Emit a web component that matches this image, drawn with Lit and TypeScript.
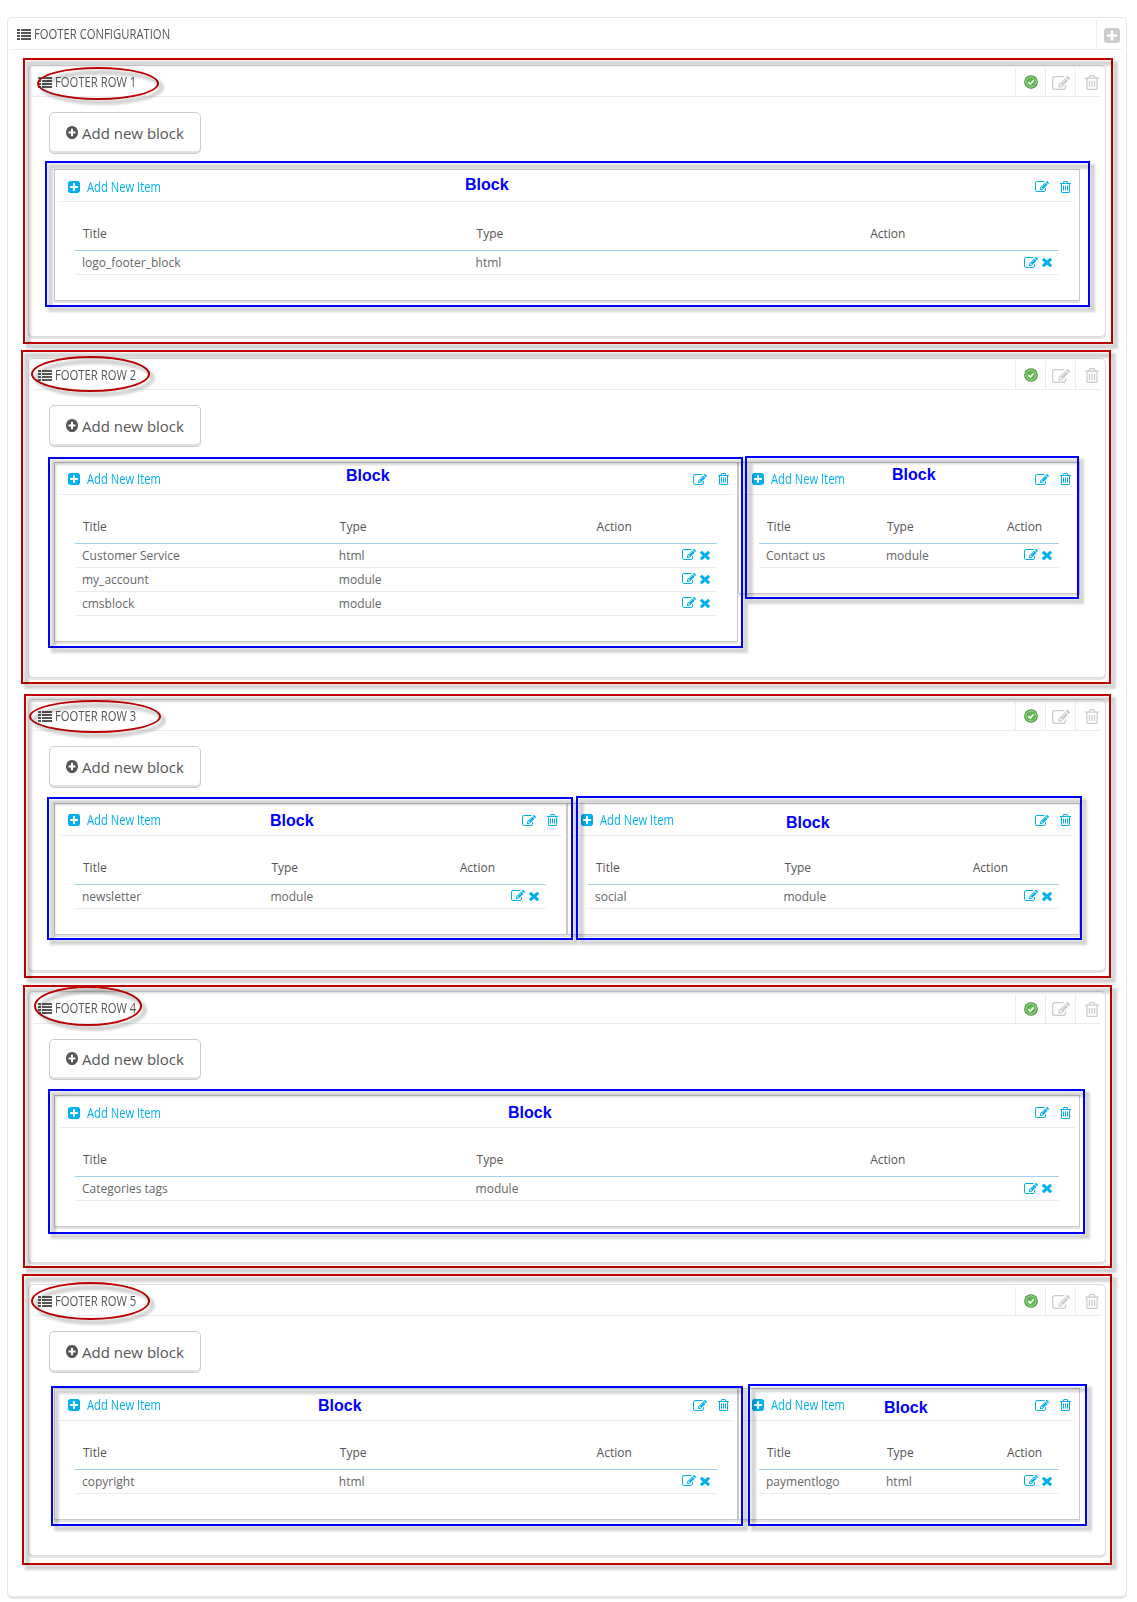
import { LitElement, html, css, svg } from "lit";
import { customElement, property } from "lit/decorators.js";
import { styleMap } from "lit/directives/style-map.js";

interface Item { title: string; type: string }
interface Block { cols: number; items: Item[] }
interface Row { title: string; gap: number; blocks: Block[] }

const ROWS: Row[] = [
  { title: "Footer Row 1", gap: 20.75, blocks: [{ cols: 12, items: [{ title: "logo_footer_block", type: "html" }] }] },
  { title: "Footer Row 2", gap: 21, blocks: [
    { cols: 8, items: [{ title: "Customer Service", type: "html" }, { title: "my_account", type: "module" }, { title: "cmsblock", type: "module" }] },
    { cols: 4, items: [{ title: "Contact us", type: "module" }] } ] },
  { title: "Footer Row 3", gap: 20.4, blocks: [
    { cols: 6, items: [{ title: "newsletter", type: "module" }] },
    { cols: 6, items: [{ title: "social", type: "module" }] } ] },
  { title: "Footer Row 4", gap: 20.6, blocks: [{ cols: 12, items: [{ title: "Categories tags", type: "module" }] }] },
  { title: "Footer Row 5", gap: 0, blocks: [
    { cols: 8, items: [{ title: "copyright", type: "html" }] },
    { cols: 4, items: [{ title: "paymentlogo", type: "html" }] } ] },
];

// Annotation marks: [left, top, right, bottom]
const RED = [[23, 58, 1113, 344], [21, 350, 1111, 684], [24, 694, 1111, 978], [23, 985, 1112, 1268], [22, 1274, 1112, 1565]];
const BLUE = [[45, 161, 1090, 307], [48, 457, 743, 648], [745, 456, 1079, 599], [47, 797, 573, 940], [576, 796, 1082, 940], [48, 1089, 1085, 1234], [51, 1386, 743, 1526], [748, 1384, 1087, 1526]];
const OVAL = [[37, 67, 159, 100], [31, 356, 150, 392], [29, 700, 161, 733], [34, 986, 142, 1026], [31, 1282, 150, 1320]];
// Label positions: [left, baseline]
const LABELS = [[465, 190], [346, 481], [892, 480], [270, 826], [786, 828], [508, 1118], [318, 1411], [884, 1413]];

const ICONS: Record<string, { box: string; body: unknown }> = {
  list: { box: "0 0 14 11", body: svg`<path d="M0 0h3v2H0zM0 3h3v2H0zM0 6h3v2H0zM0 9h3v2H0zM4 0h10v2H4zM4 3h10v2H4zM4 6h10v2H4zM4 9h10v2H4z"/>` },
  plusSquare: { box: "0 0 1536 1536", body: svg`<path fill-rule="evenodd" d="M1280 832V704q0-26-19-45t-45-19H896V320q0-26-19-45t-45-19H704q-26 0-45 19t-19 45v320H320q-26 0-45 19t-19 45v128q0 26 19 45t45 19h320v320q0 26 19 45t45 19h128q26 0 45-19t19-45V896h320q26 0 45-19t19-45zm256-544v960q0 119-84.500 203.500T1248 1536H288q-119 0-203.500-84.500T0 1248V288Q0 169 84.500 84.500T288 0h960q119 0 203.500 84.500T1536 288z"/>` },
  plusCircle: { box: "0 0 1536 1536", body: svg`<path fill-rule="evenodd" d="M1216 832V704q0-26-19-45t-45-19H896V384q0-26-19-45t-45-19H704q-26 0-45 19t-19 45v256H384q-26 0-45 19t-19 45v128q0 26 19 45t45 19h256v256q0 26 19 45t45 19h128q26 0 45-19t19-45V896h256q26 0 45-19t19-45zm320-64q0 209-103 385.500T1153.500 1433 768 1536t-385.500-103T103 1153.500 0 768t103-385.500T382.500 103 768 0t385.500 103T1433 382.500 1536 768z"/>` },
  edit: { box: "0 0 1792 1408", body: svg`<path fill-rule="evenodd" d="M888 1056l116-116-152-152-116 116v56h96v96h56zm440-720q-16-16-33 1L945 687q-17 17-1 33t33-1l350-350q17-17 1-33zm80 594v190q0 119-84.500 203.500T1120 1408H288q-119 0-203.500-84.500T0 1120V288Q0 169 84.500 84.500T288 0h832q63 0 117 25 15 7 18 23 3 17-9 29l-49 49q-14 14-32 8-23-6-45-6H288q-66 0-113 47t-47 113v832q0 66 47 113t113 47h832q66 0 113-47t47-113V994q0-13 9-22l64-64q15-15 35-7t20 29zM1312 192l288 288-672 672H640V864zm444 132l-92 92-288-288 92-92q28-28 68-28t68 28l152 152q28 28 28 68t-28 68z"/>` },
  trash: { box: "0 0 1408 1536", body: svg`<path fill-rule="evenodd" d="M512 608v576q0 14-9 23t-23 9h-64q-14 0-23-9t-9-23V608q0-14 9-23t23-9h64q14 0 23 9t9 23zm256 0v576q0 14-9 23t-23 9h-64q-14 0-23-9t-9-23V608q0-14 9-23t23-9h64q14 0 23 9t9 23zm256 0v576q0 14-9 23t-23 9h-64q-14 0-23-9t-9-23V608q0-14 9-23t23-9h64q14 0 23 9t9 23zm128 724V384H256v948q0 22 7 40.500t14.500 27 10.500 8.500h832q3 0 10.500-8.500t14.500-27 7-40.500zM480 256h448l-48-117q-7-9-17-11H546q-10 2-17 11zm928 32v64q0 14-9 23t-23 9h-96v948q0 83-47 143.500t-113 60.500H288q-66 0-113-58.500T128 1336V384H32q-14 0-23-9t-9-23v-64q0-14 9-23t23-9h309l70-167q15-37 54-63t79-26h320q40 0 79 26t54 63l70 167h309q14 0 23 9t9 23z"/>` },
  remove: { box: "0 0 1188 1188", body: svg`<path d="M1188 956q0 40-28 68l-136 136q-28 28-68 28t-68-28L594 866l-294 294q-28 28-68 28t-68-28L28 1024Q0 996 0 956t28-68l294-294L28 300Q0 272 0 232t28-68L164 28q28-28 68-28t68 28l294 294L888 28q28-28 68-28t68 28l136 136q28 28 28 68t-28 68L866 594l294 294q28 28 28 68z"/>` },
  enabled: { box: "0 0 16 16", body: svg`<circle cx="8" cy="8" r="7.800" fill="#3c8a33"/><circle cx="8" cy="8" r="6.500" fill="#b4e2a6"/><circle cx="8" cy="8" r="5.500" fill="#5cb84c"/><path d="M5 8.200l2.200 2.200 3.800-4.200" fill="none" stroke="#fff" stroke-width="1.900"/>` },
};

@customElement("fa-icon")
class FaIcon extends LitElement {
  @property() name = "list";
  static styles = css`
    :host { display: block; flex: none; }
    svg { display: block; width: 100%; height: 100%; fill: currentColor; }
  `;
  render() {
    const i = ICONS[this.name];
    return html`<svg viewBox=${i.box} preserveAspectRatio="none">${i.body}</svg>`;
  }
}

@customElement("footer-block")
class FooterBlock extends LitElement {
  @property({ attribute: false }) items: Item[] = [];
  static styles = css`
    :host { display: block; box-sizing: border-box; border: 1px solid #c8c8c8; box-shadow: 0 2px 0 #e4e4e4; background: #fff; padding: 0 4px 25px; }
    .head { display: flex; align-items: center; height: 32px; padding: 1.6px 4px 0 9px; box-sizing: border-box; border-bottom: 1px solid #eaedef; color: #00aff0; }
    .plus { width: 12px; height: 12px; margin-right: 7px; }
    .link { flex: 1; font: 14px/16px "Open Sans", sans-serif; white-space: nowrap; }
    .link span { display: inline-block; transform: scaleX(.8); transform-origin: 0 50%; }
    .edit { width: 14px; height: 11px; margin-right: 11px; }
    .trash { width: 11px; height: 12px; }
    .table { margin: 24px 16px 0; color: #666; font: 12px/23px "Open Sans", sans-serif; }
    .tr { display: grid; grid-template-columns: 40% 40% 20%; height: 23px; border-bottom: 1px solid #eaedef; }
    .tr > * { padding-left: 7px; }
    .th { height: 24px; border-bottom: 1px solid #a0d0eb; color: #555; line-height: 16px; }
    .th > * { padding-left: 8px; }
    .act { display: flex; justify-content: flex-end; align-items: center; gap: 4px; padding-right: 7px; color: #00aff0; }
    .act .edit { margin: 0 0 1px; }
    .x { width: 10px; height: 9px; }
  `;
  render() {
    return html`
      <div class="head"><fa-icon class="plus" name="plusSquare"></fa-icon><div class="link"><span>Add New Item</span></div>
        <fa-icon class="edit" name="edit"></fa-icon><fa-icon class="trash" name="trash"></fa-icon></div>
      <div class="table">
        <div class="tr th"><div>Title</div><div>Type</div><div>Action</div></div>
        ${this.items.map((i) => html`<div class="tr"><div>${i.title}</div><div>${i.type}</div>
          <div class="act"><fa-icon class="edit" name="edit"></fa-icon><fa-icon class="x" name="remove"></fa-icon></div></div>`)}
      </div>`;
  }
}

@customElement("footer-row")
class FooterRow extends LitElement {
  @property({ attribute: false }) row!: Row;
  static styles = css`
    :host { display: block; box-sizing: border-box; border: 1px solid #dcdcdc; border-radius: 5px; box-shadow: 0 2px 0 #e4e4e4; background: #fff; padding: 0 4px 35px; }
    .head { display: flex; align-items: center; height: 31.2px; box-sizing: border-box; border-bottom: 1px solid #eaedef; padding-left: 5px; color: #555; }
    .list { width: 14px; height: 11px; margin: 2px 3px 0 0; }
    .name { flex: 1; font: 14px/16px "Open Sans", sans-serif; padding-top: 2px; text-transform: uppercase; white-space: nowrap; }
    .name span { display: inline-block; transform: scaleX(.805); transform-origin: 0 50%; }
    .cell { display: flex; align-items: center; justify-content: center; align-self: flex-end; box-sizing: border-box; width: 30px; height: 29px; margin-bottom: -1px; border-left: 1px solid #eaedef; color: #ccc; }
    .cell:last-child { width: 26px; padding-left: 6px; }
    .ok { width: 14px; height: 14px; margin: 0 0 1px 1px; }
    .edit { width: 18px; height: 14px; margin-left: 1px; }
    .trash { width: 14px; height: 15px; }
    .btn { display: flex; align-items: center; box-sizing: border-box; width: 152px; height: 41.800px; margin: 15px 0 15px 16px; padding: 0 0 1px 16px; border: 1px solid #ccc; border-radius: 5px; box-shadow: inset 0 -2px 0 #e2e2e2; color: #555; font: 15px/20px "Open Sans", sans-serif; white-space: nowrap; }
    .circle { width: 12px; height: 13px; margin-right: 4px; }
    .blocks { display: flex; align-items: flex-start; margin: 0 21px; }
  `;
  render() {
    return html`
      <div class="head"><fa-icon class="list" name="list"></fa-icon><div class="name"><span>${this.row.title}</span></div>
        <div class="cell"><fa-icon class="ok" name="enabled"></fa-icon></div>
        <div class="cell"><fa-icon class="edit" name="edit"></fa-icon></div>
        <div class="cell"><fa-icon class="trash" name="trash"></fa-icon></div></div>
      <div class="btn"><fa-icon class="circle" name="plusCircle"></fa-icon>Add new block</div>
      <div class="blocks">${this.row.blocks.map((b) => html`<footer-block .items=${b.items} style=${styleMap({ width: `${(b.cols / 12) * 100}%` })}></footer-block>`)}</div>`;
  }
}

@customElement("app-root")
class AppRoot extends LitElement {
  static styles = css`
    :host { display: block; position: relative; box-sizing: border-box; width: 1137px; height: 1602px; padding: 17px 10px 0 7px; background: #fff; overflow: hidden; }
    .panel { box-sizing: border-box; height: 1580px; border: 1px solid #e6e6e6; border-radius: 5px; box-shadow: 0 2px 0 #e6e6e6; padding: 0 4px; }
    .head { display: flex; align-items: center; box-sizing: border-box; height: 32px; border-bottom: 1px solid #eaedef; padding-left: 5px; color: #555; }
    .list { width: 14px; height: 11px; margin: 2px 3px 0 0; }
    .name { flex: 1; font: 14px/16px "Open Sans", sans-serif; text-transform: uppercase; white-space: nowrap; }
    .name span { display: inline-block; transform: scaleX(.805); transform-origin: 0 50%; }
    .cell { display: flex; align-items: center; align-self: flex-end; box-sizing: border-box; width: 26px; height: 29px; padding: 2px 0 0 7px; border-left: 1px solid #eaedef; color: #ccc; }
    .add { width: 16px; height: 15px; }
    .rows { padding: 15.25px 16px 0; }
    .mark { position: absolute; box-sizing: border-box; border: 2px solid #c00000; }
    .mark::before { content: ""; position: absolute; inset: 1px -7px -7px 1px; border: 5px solid rgba(0, 0, 0, .17); filter: blur(1px); }
    .blue { border-color: #0000ff; }
    .oval, .oval::before { border-radius: 50%; }
    .label { position: absolute; color: #0000ff; font: bold 16px/20px "Liberation Sans", Arial, sans-serif; }
  `;
  private mark(kind: string, [l, t, r, b]: number[]) {
    return html`<div class="mark ${kind}" style=${styleMap({ left: `${l}px`, top: `${t}px`, width: `${r - l}px`, height: `${b - t}px` })}></div>`;
  }
  render() {
    return html`
      <div class="panel">
        <div class="head"><fa-icon class="list" name="list"></fa-icon><div class="name"><span>Footer configuration</span></div>
          <div class="cell"><fa-icon class="add" name="plusSquare"></fa-icon></div></div>
        <div class="rows">${ROWS.map((r) => html`<footer-row .row=${r} style=${styleMap({ marginBottom: `${r.gap}px` })}></footer-row>`)}</div>
      </div>
      ${RED.map((m) => this.mark("red", m))}
      ${BLUE.map((m) => this.mark("blue", m))}
      ${OVAL.map((m) => this.mark("oval", m))}
      ${LABELS.map(([x, y]) => html`<div class="label" style=${styleMap({ left: `${x}px`, top: `${y - 15}px` })}>Block</div>`)}
    `;
  }
}
